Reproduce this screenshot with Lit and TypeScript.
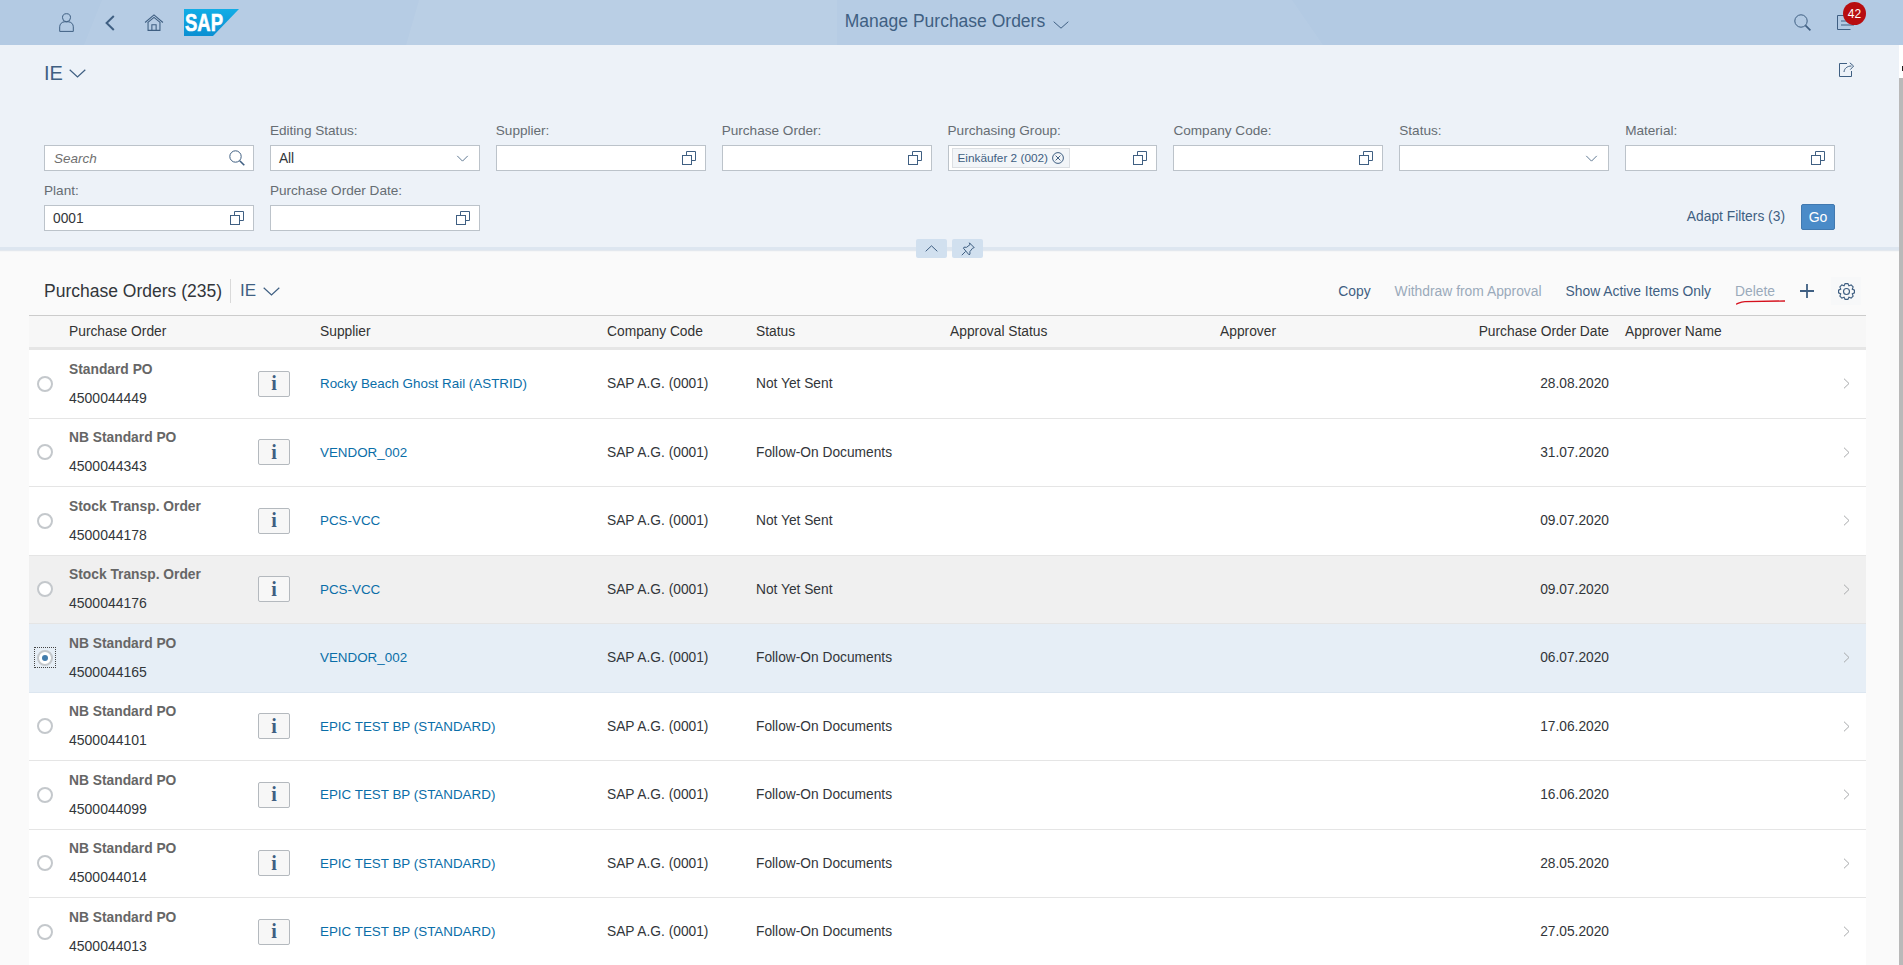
import { LitElement, html, css } from "lit";
import { customElement } from "lit/decorators.js";

const valueHelp = html`<svg class="ic vh" viewBox="0 0 14 14"><path d="M4.5 4.5V.5h9v9H9.5" /><rect x=".5" y="4.5" width="9" height="9" /></svg>`;
const selectArrow = html`<svg class="ic sel" viewBox="0 0 14 8"><path d="M1 1l6 6 6-6" /></svg>`;
const searchIc = html`<svg class="ic srch" viewBox="0 0 16 16"><circle cx="6.5" cy="6.5" r="5.7" /><path d="M10.7 10.7L15.3 15.3" stroke-width="1.6" /></svg>`;

function gearPath(): string {
  const pts: string[] = [];
  const n = 8;
  for (let i = 0; i < n; i++) {
    const a = (i / n) * Math.PI * 2;
    const step = (Math.PI * 2) / n;
    const p = (r: number, t: number) =>
      `${(8 + r * Math.cos(a + t)).toFixed(2)} ${(8 + r * Math.sin(a + t)).toFixed(2)}`;
    pts.push(p(5.9, -step * 0.5), p(7.6, -step * 0.22), p(7.6, step * 0.22));
  }
  return "M" + pts.join("L") + "Z";
}

interface Row {
  type: string;
  num: string;
  sup: string;
  status: string;
  date: string;
  cls?: string;
  noInfo?: boolean;
}
const rows: Row[] = [
  { type: "Standard PO", num: "4500044449", sup: "Rocky Beach Ghost Rail (ASTRID)", status: "Not Yet Sent", date: "28.08.2020" },
  { type: "NB Standard PO", num: "4500044343", sup: "VENDOR_002", status: "Follow-On Documents", date: "31.07.2020" },
  { type: "Stock Transp. Order", num: "4500044178", sup: "PCS-VCC", status: "Not Yet Sent", date: "09.07.2020" },
  { type: "Stock Transp. Order", num: "4500044176", sup: "PCS-VCC", status: "Not Yet Sent", date: "09.07.2020", cls: "hover" },
  { type: "NB Standard PO", num: "4500044165", sup: "VENDOR_002", status: "Follow-On Documents", date: "06.07.2020", cls: "selected", noInfo: true },
  { type: "NB Standard PO", num: "4500044101", sup: "EPIC TEST BP (STANDARD)", status: "Follow-On Documents", date: "17.06.2020" },
  { type: "NB Standard PO", num: "4500044099", sup: "EPIC TEST BP (STANDARD)", status: "Follow-On Documents", date: "16.06.2020" },
  { type: "NB Standard PO", num: "4500044014", sup: "EPIC TEST BP (STANDARD)", status: "Follow-On Documents", date: "28.05.2020" },
  { type: "NB Standard PO", num: "4500044013", sup: "EPIC TEST BP (STANDARD)", status: "Follow-On Documents", date: "27.05.2020" },
];

@customElement("app-root")
export class AppRoot extends LitElement {
  static styles = css`
    :host {
      display: block;
      width: 1903px;
      height: 965px;
      overflow: hidden;
      font-family: "Liberation Sans", Arial, sans-serif;
      font-size: 14px;
      color: #32363a;
      background: #fafafa;
    }
    * { box-sizing: border-box; }
    .ic { fill: none; stroke: #3f5f82; stroke-width: 1; display: block; flex: none; }
    .shell {
      position: relative;
      height: 45px;
      background: #b3cae3;
      display: grid;
      grid-template-columns: 1fr auto 1fr;
      align-items: center;
    }
    .deco { position: absolute; inset: 0; width: 100%; height: 45px; }
    .shell > div { position: relative; display: flex; align-items: center; }
    .left { padding-left: 59px; }
    .left .back { margin-left: 31px; }
    .left .home { margin-left: 29px; }
    .left .logo { margin-left: 20px; }
    .title { color: #3f5f82; font-size: 17.5px; gap: 8px; margin-top: -3px; padding-left: 11px; }
    .right { justify-content: flex-end; padding-right: 48px; }
    .notif { position: relative; margin-left: 26px; }
    .badge {
      position: absolute;
      left: 6px;
      top: -13px;
      width: 23px;
      height: 23px;
      border-radius: 50%;
      background: #b80d10;
      color: #fff;
      font-size: 12px;
      display: flex;
      align-items: center;
      justify-content: center;
    }
    .body { display: flex; height: 920px; }
    .main { width: 1899px; flex: none; }
    .scroll { width: 4px; flex: none; background: #fff; position: relative; }
    .scroll .tick { height: 5px; width: 1px; background: #222; margin: 21px 0 0 3px; }
    .scroll .thumb { position: absolute; left: 0; right: 0; top: 33px; bottom: 0; background: #b9b9b9; }
    .filter {
      position: relative;
      background: #edf2f8;
      padding: 0 44px 16px;
      border-bottom: 3px solid #dde6f0;
      box-shadow: 0 1px 1px rgba(160, 180, 205, 0.25);
    }
    .vhead { height: 56px; display: flex; align-items: center; justify-content: space-between; margin-bottom: 19px; }
    .share { margin-top: -8px; }
    .vname { display: flex; align-items: center; gap: 6px; color: #3f5f82; font-size: 20px; }
    .vname svg, .tvar svg { stroke-width: 1.2; }
    .grid {
      width: 1791px;
      display: grid;
      grid-template-columns: repeat(8, 1fr);
      column-gap: 16px;
      row-gap: 9px;
    }
    .field { display: flex; flex-direction: column; }
    .field label { height: 20px; line-height: 21px; color: #666d73; font-size: 13.6px; margin-bottom: 5px; }
    .input {
      height: 26px;
      background: #fff;
      border: 1px solid #bcc3ca;
      display: flex;
      align-items: center;
      justify-content: space-between;
      padding: 0 9px 0 8px;
      font-size: 13.75px;
      color: #32363a;
    }
    .input.search { align-self: end; padding-right: 8px; }
    .ph { color: #707070; font-style: italic; padding-left: 1px; font-size: 13.5px; }
    .vh { width: 14px; height: 14px; }
    .sel { width: 13px; height: 7px; stroke: #4a6785; margin-right: 1px; }
    .srch { width: 16px; height: 16px; }
    .token {
      display: flex;
      align-items: center;
      gap: 4px;
      height: 20px;
      margin-left: -5px;
      padding: 0 4.5px 0 5px;
      background: #f2f5f8;
      border: 1px solid #dcdfe3;
      color: #3f5f82;
      font-size: 11.8px;
    }
    .token svg { width: 12px; height: 12px; }
    .actions {
      grid-column: 7 / span 2;
      display: flex;
      justify-content: flex-end;
      align-items: flex-end;
      gap: 16px;
      padding-bottom: 1px;
    }
    .adapt { color: #3f5f82; height: 26px; line-height: 26px; font-size: 13.8px; }
    .go {
      width: 34px;
      height: 26px;
      background: #4a8bc8;
      border: 1px solid #4179b0;
      border-radius: 2px;
      color: #fff;
      display: flex;
      align-items: center;
      justify-content: center;
    }
    .collapse {
      position: absolute;
      left: 916px;
      top: 194px;
      display: flex;
      gap: 5px;
    }
    .collapse span {
      width: 31px;
      height: 19px;
      background: #d1e0ef;
      border-radius: 2px;
      display: flex;
      align-items: center;
      justify-content: center;
    }
    .section { padding: 0 33px 0 29px; }
    .toolbar {
      display: flex;
      align-items: center;
      height: 24px;
      margin: 29px 0 12px;
      padding: 0 12px 0 15px;
    }
    .ttl { font-size: 17.5px; color: #32363a; padding-right: 8px; border-right: 1px solid #d9d9d9; height: 24px; line-height: 24px; }
    .tvar { display: flex; align-items: center; gap: 7px; color: #3f5f82; font-size: 17px; margin-left: 9px; }
    .tools { margin-left: auto; display: flex; align-items: center; gap: 24px; color: #3f5f82; font-size: 13.85px; }
    .tools .off { color: #9aaabb; }
    .delete { position: relative; margin-right: 1px; }
    .delete svg { position: absolute; left: 1px; top: 17px; width: 49px; height: 5px; }
    .gear {
      width: 30px;
      height: 28px;
      margin: -2px -7px -2px -7px;
      background: #f7f8f9;
      display: flex;
      align-items: center;
      justify-content: center;
    }
    .thead, .tr {
      display: grid;
      grid-template-columns: 32px 251px 287px 149px 194px 270px 196px 209px 213px 36px;
      align-items: center;
    }
    .thead {
      height: 35px;
      background: #f7f7f7;
      border-top: 1px solid #ccc;
      border-bottom: 3px solid #e6e6e6;
      color: #333;
      font-size: 13.8px;
    }
    .thead > div, .tr > div { padding: 0 8px; }
    .end { text-align: right; }
    .tr {
      height: 68.5px;
      background: #fff;
      border-bottom: 1px solid #e5e5e5;
      font-size: 13.75px;
    }
    .tr.hover { background: #f0f0f0; }
    .tr.selected { background: #e6eef6; border-bottom-color: #dce6f0; }
    .tr > .radio-cell { padding: 0; display: flex; justify-content: center; }
    .radio {
      width: 16px;
      height: 16px;
      border: 2px solid #c4c8cc;
      border-radius: 50%;
      background: #fff;
      display: flex;
      align-items: center;
      justify-content: center;
    }
    .selected .radio-cell { position: relative; }
    .selected .radio::before {
      content: "";
      width: 6px;
      height: 6px;
      border-radius: 50%;
      background: #427cac;
    }
    .selected .radio::after {
      content: "";
      position: absolute;
      width: 20px;
      height: 19px;
      border: 1px dotted #444;
    }
    .tr > .po { display: flex; align-items: center; justify-content: space-between; padding-right: 22px; }
    .type { display: block; line-height: 28px; color: #666; font-weight: bold; font-size: 13.8px; }
    .num { display: block; line-height: 28px; font-size: 14px; }
    .info {
      width: 32px;
      height: 26px;
      border: 1px solid #b4b9be;
      border-radius: 2px;
      background: #f7f7f7;
      display: flex;
      align-items: center;
      justify-content: center;
      font-family: "Liberation Serif", serif;
      font-weight: bold;
      font-size: 20px;
      color: #3f5f82;
    }
    .link { color: #0a6ea8; font-size: 13.4px; }
    .chev { width: 7px; height: 11px; stroke: #a7a9ab; margin-left: 5px; }
  `;

  render() {
    return html`
      <div class="shell">
        <svg class="deco" viewBox="0 0 1903 45" preserveAspectRatio="none">
          <polygon points="102,0 84,45 406,45 419,0" fill="#fff" fill-opacity=".05" />
          <polygon points="419,0 406,45 837,45 837,0" fill="#fff" fill-opacity=".1" />
          <polygon points="837,0 837,45 1323,45 1292,0" fill="#fff" fill-opacity=".05" />
        </svg>
        <div class="left">
          <svg class="ic" width="15" height="19" viewBox="0 0 15 19"><circle cx="7.5" cy="4.7" r="4" /><path d="M.7 18.4v-4.6a5 5 0 0 1 5-5h3.6a5 5 0 0 1 5 5v4.6z" /></svg>
          <svg class="ic back" width="10" height="16" viewBox="0 0 10 16" style="stroke-width:2"><path d="M8.8 1L1.6 8l7.2 7" /></svg>
          <svg class="ic home" width="20" height="17" viewBox="0 0 18 16"><path d="M.6 8L9 .8 17.4 8" /><path d="M3 8.2L9 3.2l6 5" /><path d="M3.4 8v7.4h11.2V8" /><path d="M7 15.4v-5.2h4v5.2" /></svg>
          <svg class="logo" width="55" height="27" viewBox="0 0 55 27">
            <defs><linearGradient id="sg" x1="0" y1="0" x2="0" y2="1"><stop offset="0" stop-color="#12ade6" /><stop offset="1" stop-color="#0a8fd2" /></linearGradient></defs>
            <polygon points="0,0 55,0 29,27 0,27" fill="url(#sg)" />
            <text x="1" y="22" fill="#fff" stroke="#fff" stroke-width=".6" font-family="Liberation Sans" font-weight="bold" font-size="23.5" textLength="38" lengthAdjust="spacingAndGlyphs">SAP</text>
          </svg>
        </div>
        <div class="title">Manage Purchase Orders
          <svg class="ic" width="16" height="8" viewBox="0 0 16 8" style="margin-top:7px"><path d="M.7.7L8 7.2 15.3.7" /></svg>
        </div>
        <div class="right">
          <svg class="ic" width="17" height="17" viewBox="0 0 17 17"><circle cx="7" cy="7" r="6.2" /><path d="M11.4 11.4L16.4 16.4" stroke-width="1.7" /></svg>
          <div class="notif">
            <svg class="ic" width="18" height="15" viewBox="0 0 18 15"><path d="M13 .5H.5v14h13" /><path d="M4 6h13M4 10h13" /></svg>
            <span class="badge">42</span>
          </div>
        </div>
      </div>
      <div class="body">
        <div class="main">
          <div class="filter">
            <div class="vhead">
              <div class="vname">IE
                <svg class="ic" width="17" height="9" viewBox="0 0 17 9"><path d="M.7.7L8.5 8l7.8-7.3" /></svg>
              </div>
              <svg class="ic share" width="16" height="15" viewBox="0 0 16 15"><path d="M8 1.5H.5v13h12V9" /><path d="M5 10c.3-3.4 3-6 7.5-6" /><path d="M10.8.8L14.6 4l-3.3 3.6" /></svg>
            </div>
            <div class="grid">
              <div class="input search"><span class="ph">Search</span>${searchIc}</div>
              <div class="field"><label>Editing Status:</label><div class="input"><span>All</span>${selectArrow}</div></div>
              <div class="field"><label>Supplier:</label><div class="input"><span></span>${valueHelp}</div></div>
              <div class="field"><label>Purchase Order:</label><div class="input"><span></span>${valueHelp}</div></div>
              <div class="field"><label>Purchasing Group:</label><div class="input"><div class="token">Einkäufer 2 (002)
                <svg class="ic" viewBox="0 0 12 12"><circle cx="6" cy="6" r="5.4" /><path d="M3.6 3.6l4.8 4.8M8.4 3.6l-4.8 4.8" /></svg></div>${valueHelp}</div></div>
              <div class="field"><label>Company Code:</label><div class="input"><span></span>${valueHelp}</div></div>
              <div class="field"><label>Status:</label><div class="input"><span></span>${selectArrow}</div></div>
              <div class="field"><label>Material:</label><div class="input"><span></span>${valueHelp}</div></div>
              <div class="field"><label>Plant:</label><div class="input"><span>0001</span>${valueHelp}</div></div>
              <div class="field"><label>Purchase Order Date:</label><div class="input"><span></span>${valueHelp}</div></div>
              <div style="grid-column: span 4"></div>
              <div class="actions"><span class="adapt">Adapt Filters (3)</span><span class="go">Go</span></div>
            </div>
            <div class="collapse">
              <span><svg class="ic" width="13" height="7" viewBox="0 0 13 7"><path d="M.7 6.3L6.5.8l5.8 5.5" /></svg></span>
              <span><svg class="ic" width="14" height="14" viewBox="0 0 14 14"><path d="M8.4.8l4.8 4.8-1.6.6-2.7 3.4.1 2.6-1 .6L2.4 6.2l.6-1 2.6.1 3.4-2.7z" /><path d="M4.6 9.4L.8 13.2" /></svg></span>
            </div>
          </div>
          <div class="section">
            <div class="toolbar">
              <span class="ttl">Purchase Orders (235)</span>
              <span class="tvar">IE <svg class="ic" width="17" height="9" viewBox="0 0 17 9"><path d="M.7.7L8.5 8l7.8-7.3" /></svg></span>
              <div class="tools">
                <span>Copy</span>
                <span class="off">Withdraw from Approval</span>
                <span>Show Active Items Only</span>
                <span class="off delete">Delete
                  <svg viewBox="0 0 49 5"><path d="M0 4.2C3 3 5 1.6 9 1.6L49 1" fill="none" stroke="#d5101c" stroke-width="1.4" /></svg>
                </span>
                <svg class="ic" width="14" height="14" viewBox="0 0 14 14" style="stroke-width:1.8"><path d="M7 0v14M0 7h14" /></svg>
                <span class="gear"><svg class="ic" width="17" height="17" viewBox="0 0 16 16" style="stroke-width:1.1"><path d=${gearPath()} /><circle cx="8" cy="8" r="2.8" /></svg></span>
              </div>
            </div>
            <div class="thead">
              <div></div>
              <div>Purchase Order</div>
              <div>Supplier</div>
              <div>Company Code</div>
              <div>Status</div>
              <div>Approval Status</div>
              <div>Approver</div>
              <div class="end">Purchase Order Date</div>
              <div>Approver Name</div>
              <div></div>
            </div>
            ${rows.map(
              (r) => html`
                <div class="tr ${r.cls ?? ""}">
                  <div class="radio-cell"><span class="radio"></span></div>
                  <div class="po">
                    <div><span class="type">${r.type}</span><span class="num">${r.num}</span></div>
                    ${r.noInfo ? "" : html`<span class="info">i</span>`}
                  </div>
                  <div class="link">${r.sup}</div>
                  <div>SAP A.G. (0001)</div>
                  <div>${r.status}</div>
                  <div></div>
                  <div></div>
                  <div class="end">${r.date}</div>
                  <div></div>
                  <div><svg class="ic chev" viewBox="0 0 7 11"><path d="M1 .7L6 5.5 1 10.3" /></svg></div>
                </div>
              `
            )}
          </div>
        </div>
        <div class="scroll"><div class="tick"></div><div class="thumb"></div></div>
      </div>
    `;
  }
}
